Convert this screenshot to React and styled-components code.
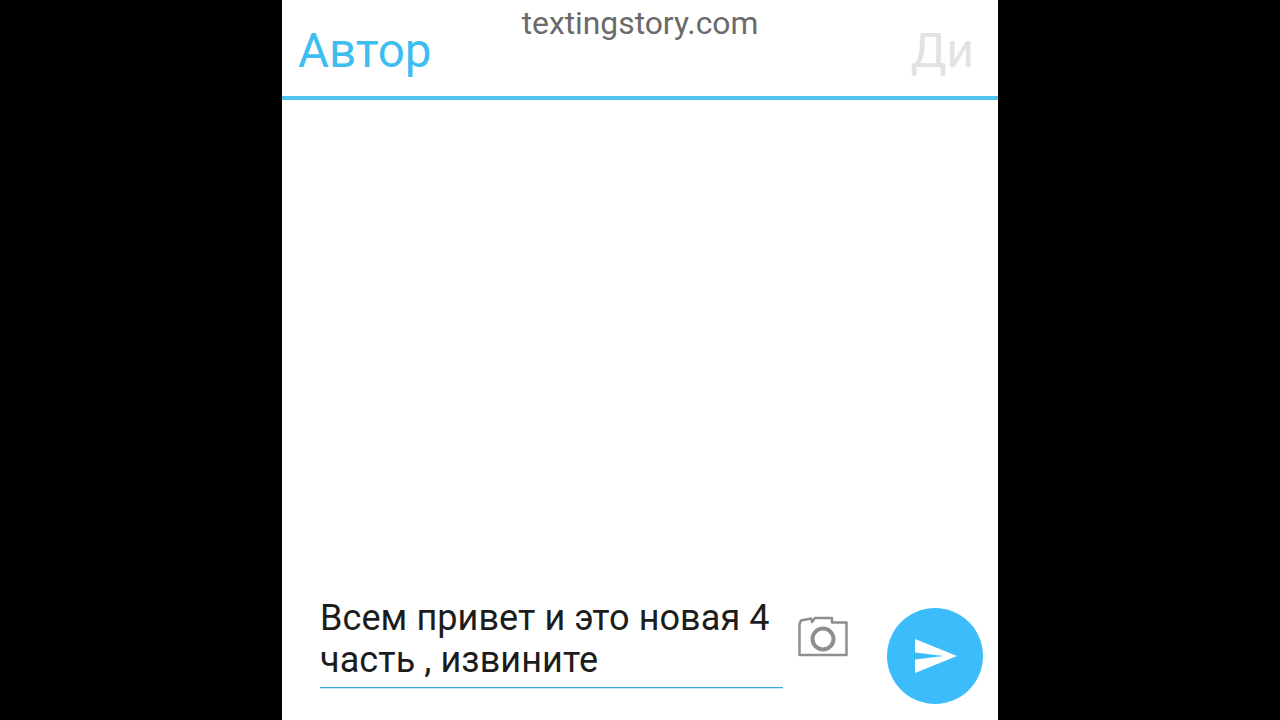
import styled, { createGlobalStyle } from 'styled-components'

const GlobalStyle = createGlobalStyle`
  html, body {
    margin: 0;
    height: 100%;
    background: #000;
    font-family: Roboto, "Liberation Sans", sans-serif;
  }
`

const Stage = styled.div`
  display: flex;
  justify-content: center;
  height: 720px;
  background: #000;
  overflow: hidden;
`
const Phone = styled.div`
  position: relative;
  display: flex;
  flex-direction: column;
  width: 716px;
  background: #fff;
`
const Watermark = styled.div`
  position: absolute;
  top: 5px;
  left: 0;
  right: 0;
  text-align: center;
  font-size: 31.8px;
  line-height: 37px;
  color: #6a6a6a;
`
const Header = styled.header`
  display: flex;
  justify-content: space-between;
  align-items: center;
  height: 96px;
  padding: 0 24px 0 16px;
  border-bottom: 4px solid #4dc3ee;
`
const Title = styled.div`
  font-size: 47.5px;
  line-height: 56px;
  margin-top: 6px;
  color: ${p => (p.$muted ? '#e2e2e2' : '#3dbdf0')};
`
const Messages = styled.main`
  flex: 1;
`
const Composer = styled.footer`
  display: flex;
  align-items: flex-end;
  padding: 0 15px 16px 38px;
`
const Field = styled.div`
  width: 463px;
  height: 92px;
  padding-top: 1px;
  margin-bottom: 16px;
  border-bottom: 1px solid #3aa6d4;
  box-shadow: 0 1px 0 #c4e8f6;
  font-size: 36px;
  line-height: 42px;
  letter-spacing: 0.08px;
  color: #1c1c1c;
  white-space: pre-line;
  box-sizing: border-box;
  flex: none;
`
const CameraButton = styled.div`
  display: flex;
  width: 50px;
  height: 44px;
  margin: 0 39px 47px 15px;
  flex: none;
`
const SendButton = styled.div`
  display: flex;
  align-items: center;
  justify-content: center;
  width: 96px;
  height: 96px;
  border-radius: 50%;
  background: #3cbcfa;
  flex: none;
`

function CameraIcon() {
  return (
    <svg width="50" height="44" viewBox="0 0 50 44" fill="none" stroke="#8e8e8e" strokeWidth="2.5" strokeLinejoin="round">
      <path d="M1.500 42V11L3 7.500L13 5.500L14 9L17 5H34V9.500H48.500V42z" />
      <circle cx="25" cy="26" r="10.500" strokeWidth="4" />
    </svg>
  )
}

function SendIcon() {
  return (
    <svg width="44" height="36" viewBox="-1 0 44 36">
      <path d="M1 1L43 18L1 35V21.500L30 18L1 14.500z" fill="#fff" />
    </svg>
  )
}

export default function App() {
  return (
    <Stage>
      <GlobalStyle />
      <Phone>
        <Watermark>textingstory.com</Watermark>
        <Header>
          <Title>Автор</Title>
          <Title $muted>Ди</Title>
        </Header>
        <Messages />
        <Composer>
          <Field>{'Всем привет и это новая 4\nчасть , извините'}</Field>
          <CameraButton><CameraIcon /></CameraButton>
          <SendButton><SendIcon /></SendButton>
        </Composer>
      </Phone>
    </Stage>
  )
}
